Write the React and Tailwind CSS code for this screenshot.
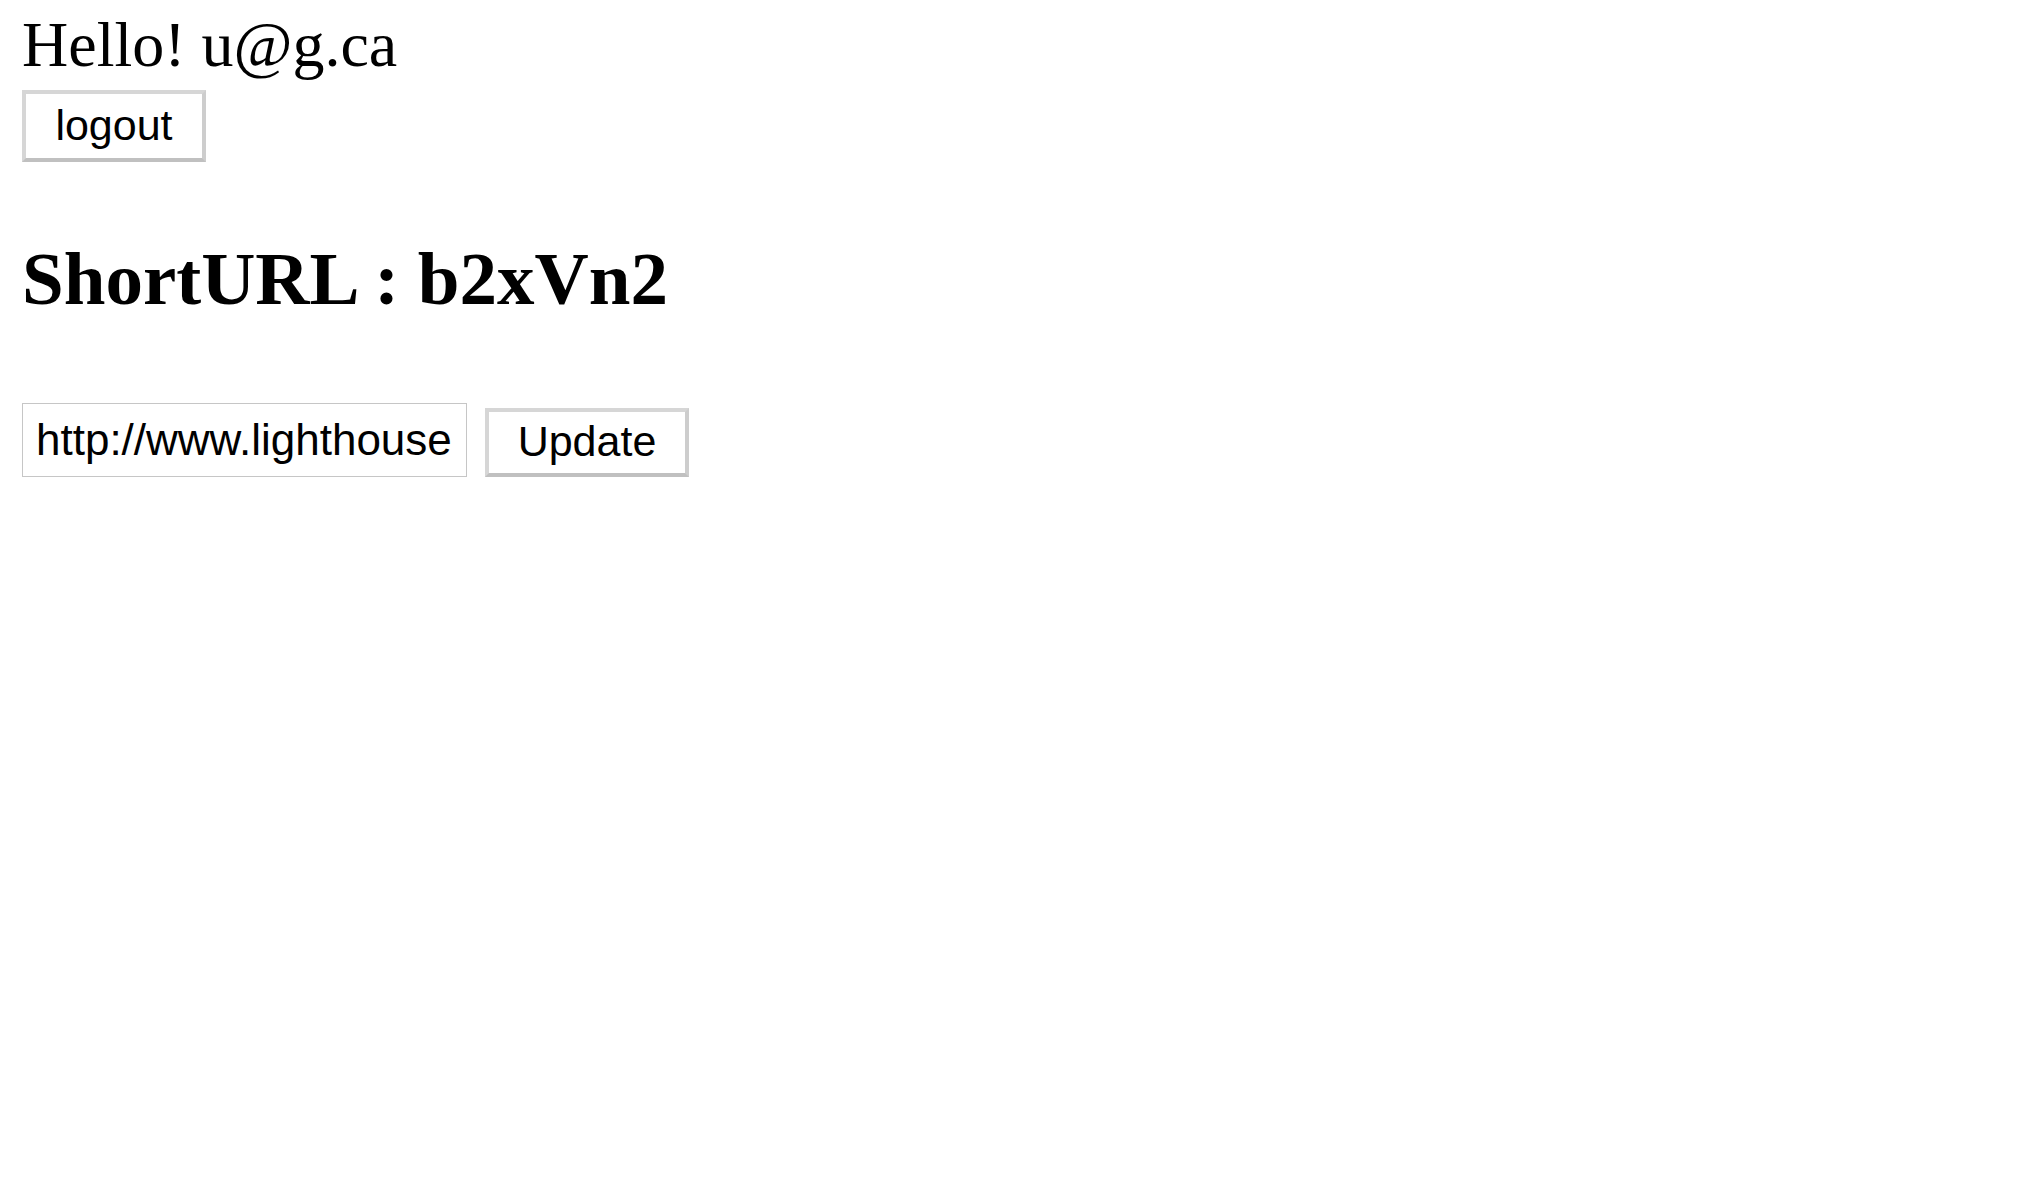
export default function App() {
  return (
    <div className="min-h-screen bg-white pl-[22px] pt-[8px] text-black">
      <div className="font-['Liberation_Serif','Times_New_Roman',serif] text-[64px] leading-[74px]">
        Hello! u@g.ca
      </div>
      <button className="mt-[8px] flex h-[72px] w-[184px] items-center justify-center border-4 border-t-[#d6d6d6] border-l-[#d6d6d6] border-b-[#c0c0c0] border-r-[#cdcdcd] bg-white pb-[2px] font-['Liberation_Sans',Arial,sans-serif] text-[43px] leading-[50px] text-black">
        logout
      </button>
      <h1 className="mt-[79px] font-['Liberation_Serif','Times_New_Roman',serif] text-[75px] font-bold leading-[75px]">
        ShortURL : b2xVn2
      </h1>
      <form className="mt-[87px] flex items-end gap-[18px]">
        <input
          type="text"
          defaultValue="http://www.lighthouselabs.ca"
          className="h-[74px] w-[445px] border border-[#c6c6c6] bg-white px-[13px] pb-[1px] font-['Liberation_Sans',Arial,sans-serif] text-[44px] leading-[51px] text-black outline-none"
        />
        <button
          type="button"
          className="flex h-[69px] w-[204px] items-center justify-center border-4 border-t-[#d6d6d6] border-l-[#d6d6d6] border-b-[#c0c0c0] border-r-[#cdcdcd] bg-white pb-[4px] font-['Liberation_Sans',Arial,sans-serif] text-[43px] leading-[50px] text-black"
        >
          Update
        </button>
      </form>
    </div>
  );
}
